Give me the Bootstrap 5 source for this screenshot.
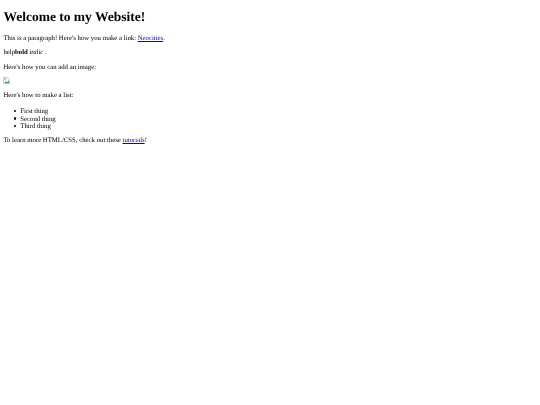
<!DOCTYPE html>
<html lang="en">
<head>
<meta charset="utf-8">
<title>Welcome</title>
<link href="https://cdn.jsdelivr.net/npm/bootstrap@5.3.0/dist/css/bootstrap.min.css" rel="stylesheet">
<style>
body { font-family: "Liberation Serif", "Times New Roman", serif; font-size: 6.75px; line-height: 7.6px; color: #000; background: #fff; padding: 3.4px; text-rendering: geometricPrecision; filter: blur(.2px); }
.page-title { font-family: inherit; font-size: 13.5px; font-weight: 700; line-height: 15.6px; margin: 5.6px 0 10.3px; }
.page-text { margin: 0 0 6.9px; }
.page-text a, .page-text a:visited { color: #00e; }
.pic-row { margin-bottom: 7.6px; }
.list-intro { margin-bottom: 8px; }
.page-list { margin: 0 0 6.6px; padding-left: 16.9px; list-style: none; }
.page-list li::before { content: ""; display: inline-block; width: 2.2px; height: 2.2px; border-radius: 50%; background: #000; margin-left: -6px; margin-right: 3.8px; vertical-align: 1px; }
.broken-pic { display: block; width: 7px; height: 7.6px; margin-top: -1.1px; }
</style>
</head>
<body>
<h1 class="page-title">Welcome to my Website!</h1>
<p class="page-text">This is a paragraph! Here's how you make a link: <a href="#">Neocities</a>.</p>
<p class="page-text">help<b>bold</b> <i>italic</i> .</p>
<p class="page-text">Here's how you can add an image:</p>
<p class="page-text pic-row"><svg class="broken-pic" viewBox="0 0 7 7.6"><path d="M.5.5h4l2 2v4h-6z" fill="#fff" stroke="#aaa" stroke-width=".6"/><path d="M1 6.2l2-2 1 1 2-2v3z" fill="#5a9e4b"/><path d="M1 1h2.4v2.4H1z" fill="#b4cff0"/></svg></p>
<p class="page-text list-intro">Here's how to make a list:</p>
<ul class="page-list"><li>First thing</li><li>Second thing</li><li>Third thing</li></ul>
<p class="page-text">To learn more HTML/CSS, check out these <a href="#">tutorials</a>!</p>
<script src="https://cdn.jsdelivr.net/npm/bootstrap@5.3.0/dist/js/bootstrap.bundle.min.js"></script>
</body>
</html>
